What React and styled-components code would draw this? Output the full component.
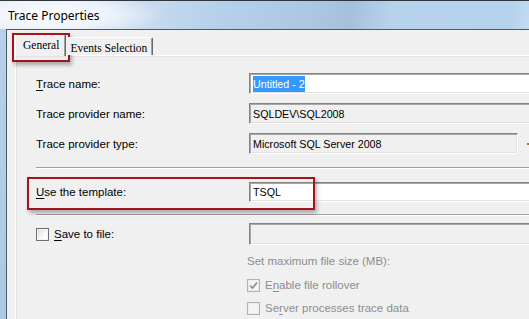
import React from 'react';
import styled, { createGlobalStyle } from 'styled-components';

const GlobalStyle = createGlobalStyle`
  html, body {
    margin: 0;
    padding: 0;
    overflow: hidden;
    background: #f0f0f0;
  }
  body {
    font-family: "Liberation Sans", Arial, sans-serif;
  }
`;

function Check({ checked, disabled }) {
  return (
    <CheckBox $disabled={disabled}>
      {checked && (
        <svg width="9" height="9" viewBox="0 0 9 9">
          <path d="M1 4.5 L3.5 7 L8 1.5" fill="none" stroke={disabled ? '#8c8c8c' : '#222'} strokeWidth="1.6" />
        </svg>
      )}
    </CheckBox>
  );
}

export default function App() {
  return (
    <>
      <GlobalStyle />
      <Window>
        <TitleBar>Trace Properties</TitleBar>
        <Client>
          <TabStrip>
            <Tab $active>
              General
              <Highlight style={{ left: -4, top: -2, width: 58, height: 29 }} />
            </Tab>
            <Tab>Events Selection</Tab>
          </TabStrip>
          <Panel>
            <Row $top={17}>
              <Label><u>T</u>race name:</Label>
              <Field $wide>
                <Selected>Untitled - 2</Selected>
              </Field>
            </Row>
            <Row $top={9}>
              <Label>Trace provider name:</Label>
              <Field $wide $readonly>SQLDEV\SQL2008</Field>
            </Row>
            <Row $top={9}>
              <Label>Trace provider type:</Label>
              <Field $readonly>Microsoft SQL Server 2008</Field>
              <Peek />
            </Row>
            <Separator $top={13} />
            <Row $top={13} $h={20}>
              <Label><u>U</u>se the template:</Label>
              <Field $wide $h={20}>TSQL</Field>
              <Highlight style={{ left: -9, top: -5, width: 288, height: 33 }} />
            </Row>
            <Separator $top={12} />
            <Row $top={7} $h={22}>
              <Label>
                <Check />
                <LabelText><u>S</u>ave to file:</LabelText>
              </Label>
              <Field $wide $readonly $h={22} />
            </Row>
            <SubOption $top={9}>Set maximum file size (MB):</SubOption>
            <SubOption $top={10}>
              <Check checked disabled />
              <LabelText>E<u>n</u>able file rollover</LabelText>
            </SubOption>
            <SubOption $top={9}>
              <Check disabled />
              <LabelText>Se<u>r</u>ver processes trace data</LabelText>
            </SubOption>
          </Panel>
        </Client>
      </Window>
    </>
  );
}

const Window = styled.div`
  position: relative;
  width: 529px;
  height: 319px;
  overflow: hidden;
  display: flex;
  flex-direction: column;
  border-top: 1px solid #2f353d;
  box-sizing: border-box;
  background: linear-gradient(180deg, #b9d1ea 0%, #adc8e4 100%);
`;

const TitleBar = styled.div`
  height: 28px;
  flex: none;
  display: flex;
  align-items: center;
  padding-left: 8px;
  font-family: "Noto Sans", "Liberation Sans", sans-serif;
  font-size: 12px;
  color: #000;
  background:
    radial-gradient(ellipse 110px 26px at 55px 14px, rgba(255, 255, 255, 0.95) 0%, rgba(255, 255, 255, 0.6) 55%, rgba(255, 255, 255, 0) 100%),
    linear-gradient(100deg, #dbe6f2 0%, #c3d9ee 30%, #b4d0ea 42%, #abc6e1 60%, #a5c0db 66%, #b7d3ec 74%, #b5d2ec 96%, #c2dbf1 100%);
`;

const Client = styled.div`
  flex: 1;
  margin-left: 6px;
  border-top: 1px solid #4a596b;
  border-left: 1px solid #4a596b;
  background: #f0f0f0;
  display: flex;
  flex-direction: column;
  padding-left: 8px;
`;

const TabStrip = styled.div`
  height: 25px;
  display: flex;
  align-items: flex-end;
  position: relative;
  z-index: 2;
`;

const Tab = styled.div`
  position: relative;
  box-sizing: border-box;
  height: ${p => (p.$active ? '22px' : '18px')};
  margin-bottom: ${p => (p.$active ? '-1px' : '0')};
  padding: ${p => (p.$active ? '3px 6px 0 7px' : '3px 5px 0 4px')};
  font-family: "Liberation Serif", "Times New Roman", serif;
  font-size: 11.5px;
  line-height: 14px;
  color: #000;
  background: #f0f0f0;
  border-top: 1px solid #fff;
  border-left: ${p => (p.$active ? '1px solid #fff' : 'none')};
  border-right: 1px solid #696969;
  box-shadow: inset -1px 0 0 #a0a0a0;
  border-radius: 2px 2px 0 0;
`;

const Panel = styled.div`
  flex: 1;
  display: flex;
  flex-direction: column;
  border-top: 1px solid #fff;
  border-left: 1px solid #fff;
  box-shadow: inset 1px 1px 0 #e3e3e3;
  padding-left: 20px;
`;

const Row = styled.div`
  position: relative;
  display: flex;
  align-items: center;
  height: ${p => p.$h || 21}px;
  margin-top: ${p => p.$top}px;
`;

const Label = styled.div`
  width: 213px;
  flex: none;
  display: flex;
  align-items: center;
  font-size: 11.5px;
  color: #000;
  u {
    text-decoration: underline;
    text-underline-offset: 2px;
  }
`;

const LabelText = styled.span`
  margin-left: 5px;
  u {
    text-decoration: underline;
    text-underline-offset: 2px;
  }
`;

const Field = styled.div`
  box-sizing: border-box;
  flex: none;
  width: ${p => (p.$wide ? '300px' : '269px')};
  height: ${p => p.$h || 21}px;
  display: flex;
  align-items: center;
  padding-left: 3px;
  font-size: 10.7px;
  color: #000;
  white-space: nowrap;
  background: ${p => (p.$readonly ? '#f0f0f0' : '#fff')};
  border: 1px solid;
  border-color: #838383 #fff #fff #838383;
  box-shadow: inset 1px 1px 0 #a8a8a8, inset -1px -1px 0 #e3e3e3;
`;

const Selected = styled.span`
  background: #3399ff;
  color: #fff;
  padding: 1px 0;
  line-height: 14px;
`;

const Peek = styled.span`
  width: 2px;
  height: 2px;
  margin-left: 9px;
  background: #b0702a;
`;

const Separator = styled.div`
  height: 1px;
  margin-top: ${p => p.$top}px;
  background: #a0a0a0;
  border-bottom: 1px solid #fff;
`;

const SubOption = styled.div`
  display: flex;
  align-items: center;
  height: 14px;
  margin-top: ${p => p.$top}px;
  padding-left: 211px;
  font-size: 11.5px;
  color: #8d8d8d;
  white-space: nowrap;
`;

const CheckBox = styled.span`
  box-sizing: border-box;
  width: 13px;
  height: 13px;
  flex: none;
  display: inline-flex;
  align-items: center;
  justify-content: center;
  border: 1px solid ${p => (p.$disabled ? '#b1b1b1' : '#707070')};
  background: ${p => (p.$disabled ? '#f4f4f4' : 'linear-gradient(135deg, #dcdcdc 0%, #fff 70%)')};
  box-shadow: inset 0 0 0 1px ${p => (p.$disabled ? '#ececec' : '#f4f4f4')};
`;

const Highlight = styled.span`
  position: absolute;
  box-sizing: border-box;
  border: 2px solid #a3151b;
  box-shadow: 2px 3px 4px rgba(0, 0, 0, 0.3);
  pointer-events: none;
`;
